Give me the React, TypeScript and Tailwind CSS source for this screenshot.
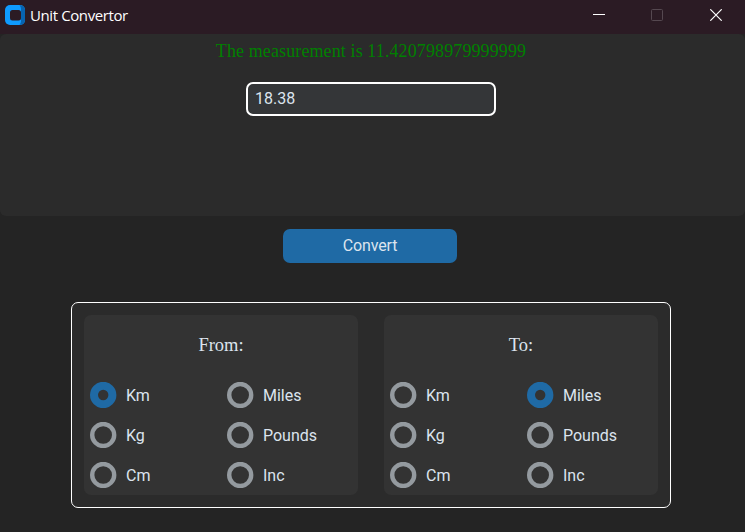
import React, { useState } from "react";

const UNITS = ["Km", "Miles", "Kg", "Pounds", "Cm", "Inc"];

function TitleBar() {
  return (
    <header className="flex h-[34px] items-start bg-[#2b1b24] pl-[5px] text-white">
      <svg width="20" height="20" viewBox="0 0 20 20" className="mt-[5px] shrink-0">
        <rect width="20" height="20" rx="5" fill="#0f9bff" />
        <path d="M14.5 0.3 Q20 0 20 5 V15 Q20 20 14.5 19.7 Q16 18 16 16 V4 Q16 2 14.5 0.3Z" fill="#0763b0" />
        <rect x="5" y="5" width="11" height="10.5" rx="2.5" fill="#2b1b24" />
      </svg>
      <h1 className="ml-[5px] mt-[5px] whitespace-nowrap font-['Open_Sans',sans-serif] text-[15px] leading-[21px] tracking-[-0.4px]">
        Unit Convertor
      </h1>
      <svg width="12" height="12" viewBox="0 0 12 12" className="ml-auto mt-[9px]">
        <path d="M0 5.5H12" stroke="#fff" />
      </svg>
      <svg width="12" height="12" viewBox="0 0 12 12" className="ml-[46px] mt-[9px]">
        <rect x="0.5" y="0.5" width="11" height="11" rx="1" fill="none" stroke="#554850" />
      </svg>
      <svg width="12" height="12" viewBox="0 0 12 12" className="ml-[47px] mr-[23px] mt-[9px]">
        <path d="M0.3 0.3L11.7 11.7M11.7 0.3L0.3 11.7" stroke="#fff" strokeWidth="1.2" />
      </svg>
    </header>
  );
}

function UnitGroup({ title, value, onChange }: { title: string; value: string; onChange: (unit: string) => void }) {
  return (
    <section className="h-[180px] w-[274px] rounded-[7px] bg-[#333333] pt-[19px]">
      <h2 className="text-center font-['Liberation_Serif',serif] text-[18.5px] leading-[22px]">{title}</h2>
      <div className="mt-[19px] grid grid-cols-2 pl-1.5">
        {UNITS.map((unit) => (
          <button
            key={unit}
            onClick={() => onChange(unit)}
            className="flex h-10 items-center gap-[9px] odd:w-[137px] even:ml-[3px]"
          >
            <svg width="27" height="26" viewBox="0 0 27 26" className="shrink-0">
              {value === unit ? (
                <circle cx="13.2" cy="13" r="9.2" fill="none" stroke="#1f6aa5" strokeWidth="8" />
              ) : (
                <circle cx="13.2" cy="13" r="11" fill="none" stroke="#949a9f" strokeWidth="4.4" />
              )}
            </svg>
            <span className="pt-0.5 text-base leading-5">{unit}</span>
          </button>
        ))}
      </div>
    </section>
  );
}

export default function App() {
  const [amount, setAmount] = useState("18.38");
  const [from, setFrom] = useState("Km");
  const [to, setTo] = useState("Miles");

  return (
    <div className="h-[532px] w-[745px] overflow-hidden bg-[#242424] font-['Roboto',sans-serif] text-[#dce4ee]">
      <TitleBar />
      <div className="bg-[#242424]">
        <div className="flex h-[182px] flex-col items-center rounded-[6px] bg-[#2b2b2b] pr-[3px] pt-[6px]">
          <p className="whitespace-nowrap font-['Liberation_Serif',serif] text-[18px] leading-[22px] tracking-[0.11px] text-[#008000]">
            The measurement is 11.420798979999999
          </p>
          <input
            value={amount}
            onChange={(event) => setAmount(event.target.value)}
            className="mt-5 h-[34px] w-[250px] rounded-[7px] border-2 border-white bg-[#343638] px-[7px] pb-0.5 text-base outline-none"
          />
        </div>
      </div>
      <main className="flex flex-col items-center pr-[3px]">
        <button className="ml-[-2px] mt-[13px] h-[34px] w-[174px] rounded-[7px] bg-[#1f6aa5] text-base tracking-[-0.15px]">
          Convert
        </button>
        <div className="mt-[39px] flex h-[206px] w-[600px] justify-between rounded-[7px] border border-white bg-[#2b2b2b] p-3">
          <UnitGroup title="From:" value={from} onChange={setFrom} />
          <UnitGroup title="To:" value={to} onChange={setTo} />
        </div>
      </main>
    </div>
  );
}
